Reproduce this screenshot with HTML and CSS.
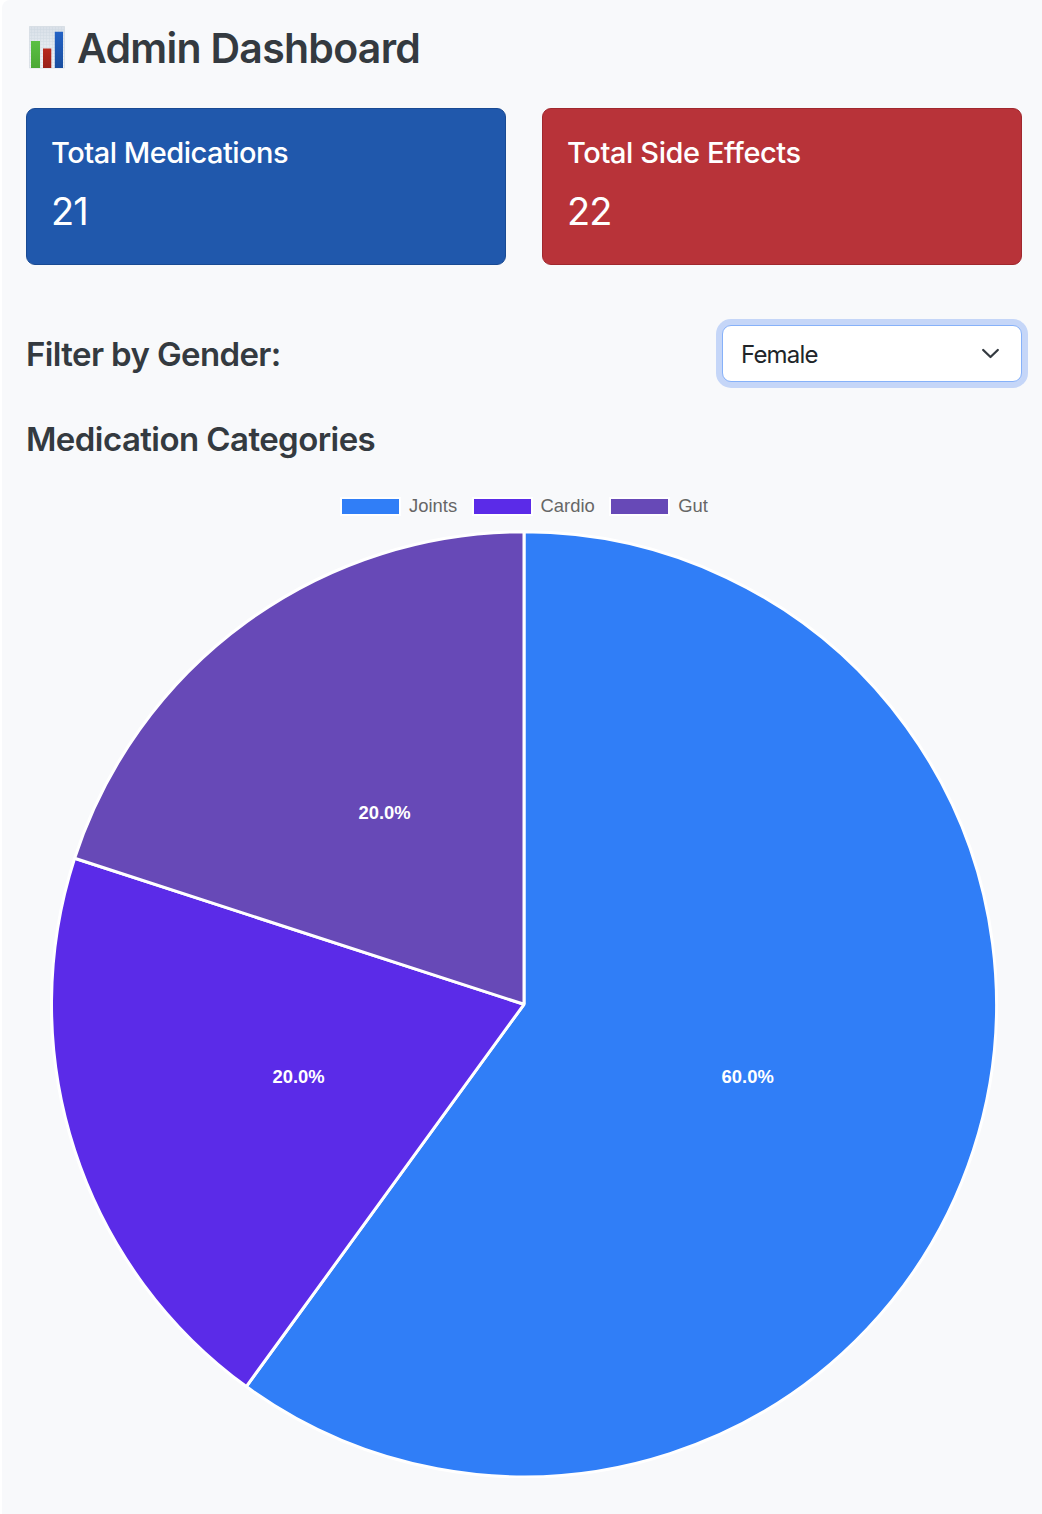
FILE: index.html
```html
<!DOCTYPE html>
<html lang="en">
<head>
<meta charset="utf-8">
<title>Admin Dashboard</title>
<link rel="stylesheet" href="styles.css">
</head>
<body>
<main class="dashboard">
  <header class="page-header">
    <svg class="logo" width="38" height="43" viewBox="0 0 38 43" aria-hidden="true">
      <defs>
        <linearGradient id="paper" x1="0" y1="0" x2="0" y2="1"><stop offset="0" stop-color="#d9e0e8"/><stop offset="1" stop-color="#f1f5f9"/></linearGradient>
        <linearGradient id="green" x1="0" y1="0" x2="0" y2="1"><stop offset="0" stop-color="#5bc043"/><stop offset="1" stop-color="#4ca936"/></linearGradient>
        <linearGradient id="red" x1="0" y1="0" x2="0" y2="1"><stop offset="0" stop-color="#b9291d"/><stop offset="1" stop-color="#98211a"/></linearGradient>
        <linearGradient id="blue" x1="0" y1="0" x2="0" y2="1"><stop offset="0" stop-color="#2362c5"/><stop offset="1" stop-color="#194e9f"/></linearGradient>
        <pattern id="grid" width="3" height="3" patternUnits="userSpaceOnUse"><path d="M0 .5H3M.5 0V3" stroke="#b8c6d3" stroke-width=".5" opacity=".35"/></pattern>
      </defs>
      <path d="M1.5 .5H36.5V42H1.5Z" fill="url(#paper)"/>
      <path d="M1.5 .5H36.5V42H1.5Z" fill="url(#grid)" stroke="#d3dae1" stroke-width=".7"/>
      <path d="M3 15H12V42H3Z" fill="url(#green)"/>
      <path d="M15 22.5H23.3V42H15Z" fill="url(#red)"/>
      <path d="M26.8 5.8H35V42H26.8Z" fill="url(#blue)"/>
    </svg>
    <h1 class="title"><span>Admin Dashboard</span></h1>
  </header>

  <section class="stats">
    <article class="card card-blue">
      <h2 class="card-title"><span>Total Medications</span></h2>
      <p class="card-value"><span>21</span></p>
    </article>
    <article class="card card-red">
      <h2 class="card-title card-title-effects"><span>Total Side Effects</span></h2>
      <p class="card-value"><span>22</span></p>
    </article>
  </section>

  <section class="filter">
    <h2 class="heading heading-filter"><span>Filter by Gender:</span></h2>
    <button class="select" type="button">
      <span>Female</span>
      <svg width="20" height="14" viewBox="0 0 20 14" aria-hidden="true"><path d="M3.2 3L10.5 10L17.8 3" fill="none" stroke="#343a40" stroke-width="2.3" stroke-linecap="round" stroke-linejoin="round"/></svg>
    </button>
  </section>

  <section class="chart">
    <h2 class="heading"><span>Medication Categories</span></h2>
    <ul class="legend">
      <li><i class="swatch joints"></i><span>Joints</span></li>
      <li><i class="swatch cardio"></i><span>Cardio</span></li>
      <li><i class="swatch gut"></i><span>Gut</span></li>
    </ul>
    <svg class="pie" width="948" height="948" viewBox="-474 -474.3 948 948">
      <path class="slice slice-joints" d="M0 0V-472.5A472.5 472.5 0 1 1 -277.73 382.26Z"/>
      <path class="slice slice-cardio" d="M0 0L-277.73 382.26A472.5 472.5 0 0 1 -449.37 -146.01Z"/>
      <path class="slice slice-gut" d="M0 0L-449.37 -146.01A472.5 472.5 0 0 1 0 -472.5Z"/>
      <text class="percent" x="223.7" y="79">60.0%</text>
      <text class="percent" x="-225.5" y="79">20.0%</text>
      <text class="percent" x="-139.5" y="-185">20.0%</text>
    </svg>
  </section>
</main>
</body>
</html>
```
FILE: styles.css
```css
* { box-sizing: border-box; }
body {
  margin: 0;
  background: #fff;
  color: #343a40;
  font-family: Inter, "Liberation Sans", sans-serif;
}
h1, h2, p, ul { margin: 0; padding: 0; }
.dashboard {
  height: 1514px;
  margin-left: 2px;
  padding: 24px 20px 0 24px;
  background: #f8f9fb;
  border-radius: 8px 0 0 0;
  overflow: hidden;
}
.page-header { display: flex; align-items: center; height: 50px; gap: 11px; padding-left: 2px; }
.logo { display: block; margin-top: -4px; }
.title { margin-top: -2px; font-size: 41px; line-height: 50px; font-weight: 600; letter-spacing: -.73px; white-space: nowrap; }
.stats { display: grid; grid-template-columns: 1fr 1fr; gap: 36px; margin-top: 34px; }
.card {
  height: 157px;
  padding: 26px 24px;
  border: 1px solid;
  border-radius: 9px;
  color: #fff;
}
.card-blue { background: #2058ac; border-color: #194a93; }
.card-red { background: #b83339; border-color: #a0282e; }
.card-title { font-size: 29px; line-height: 36px; font-weight: 500; letter-spacing: -.5px; }
.card-title-effects { letter-spacing: -.4px; }
.card-value { margin-top: 17px; font-size: 38px; line-height: 46px; font-weight: 400; letter-spacing: -1px; }
.filter { display: flex; align-items: center; justify-content: space-between; height: 57px; margin-top: 60px; }
.heading { font-size: 33px; line-height: 42px; font-weight: 600; letter-spacing: -.57px; white-space: nowrap; }
.heading-filter { letter-spacing: -.62px; }
.select {
  display: flex;
  align-items: center;
  justify-content: space-between;
  width: 300px;
  height: 57px;
  padding: 2px 21px 0 18px;
  border: 1px solid #86b1f9;
  border-radius: 9px;
  background: #fff;
  box-shadow: 0 0 0 6px #c5d6f8;
  color: #212529;
  font-family: inherit;
  font-size: 24px;
  letter-spacing: -.8px;
}
.select svg { margin-top: -2px; }
.chart { margin-top: 36px; }
.legend {
  display: flex;
  justify-content: center;
  gap: 14.5px;
  height: 22px;
  margin: 35px 0 0;
  list-style: none;
  color: #666;
  font: 18.4px/22px "Liberation Sans", sans-serif;
}
.legend li { display: flex; align-items: center; gap: 8px; }
.swatch { width: 61px; height: 19px; border: 2px solid #fff; }
.joints { background: #307ef7; }
.cardio { background: #5b2be8; }
.gut { background: #6749b7; }
.pie { display: block; margin: 13px auto 0; }
.slice { stroke: #fff; stroke-width: 3; stroke-linejoin: bevel; }
.slice-joints { fill: #307ef7; }
.slice-cardio { fill: #5b2be8; }
.slice-gut { fill: #6749b7; }
.percent { fill: #fff; font: bold 18.4px "Liberation Sans", sans-serif; text-anchor: middle; }
```
